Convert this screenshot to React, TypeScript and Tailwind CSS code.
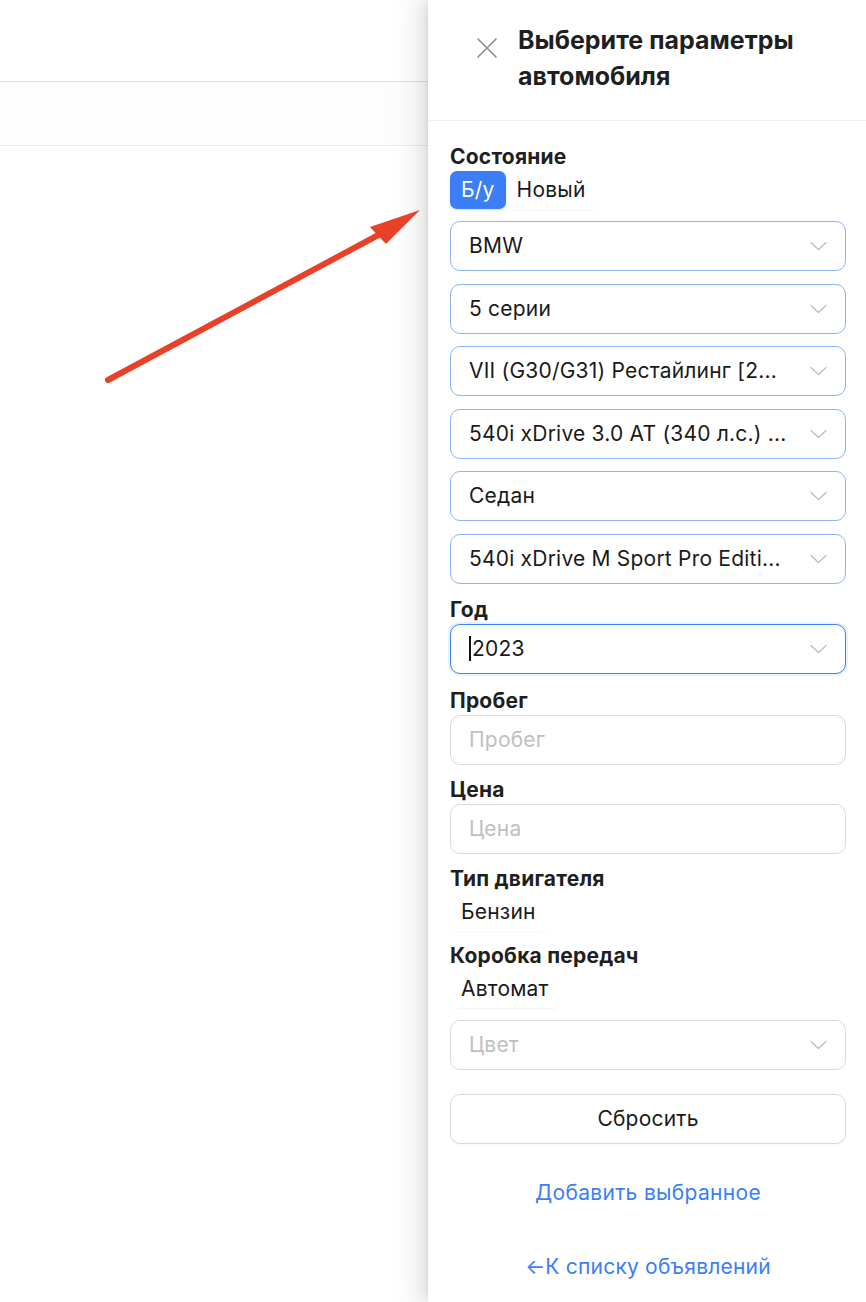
import React from "react";

const font = { fontFamily: 'Inter, "Noto Sans", "Liberation Sans", sans-serif' };

function Chevron() {
  return (
    <svg width="17" height="10" viewBox="0 0 17 10" fill="none" className="shrink-0">
      <path d="M1 1.5 L8.5 8.5 L16 1.5" stroke="#bdbdbd" strokeWidth="1.3" strokeLinecap="round" strokeLinejoin="round" />
    </svg>
  );
}

function Select({ value, placeholder, focused }: { value?: string; placeholder?: string; focused?: boolean }) {
  return (
    <div
      className={
        "flex h-[50px] items-center justify-between rounded-[10px] border bg-white pl-[18px] pr-[18px] " +
        (focused
          ? "border-[#3f82f2] shadow-[0_0_0_2px_rgba(5,145,255,0.1)]"
          : value
          ? "border-[#8fb5f5]"
          : "border-[#d9d9d9]")
      }
    >
      <div className="flex items-center whitespace-nowrap text-[21px] leading-[28px] tracking-[0.01em]">
        {focused && <span className="mr-[1px] inline-block h-[25px] w-[2px] bg-[#111]" />}
        {value ? (
          <span className="text-[#1a1a1a]">{value}</span>
        ) : (
          <span className="text-[#bfbfbf]">{placeholder}</span>
        )}
      </div>
      <Chevron />
    </div>
  );
}

function Input({ placeholder }: { placeholder: string }) {
  return (
    <div className="flex h-[50px] items-center rounded-[10px] border border-[#d9d9d9] bg-white pl-[18px] text-[21px] leading-[28px] tracking-[0.01em] text-[#bfbfbf]">
      {placeholder}
    </div>
  );
}

function Label({ children }: { children: React.ReactNode }) {
  return (
    <div className="text-[21px] font-bold leading-[28px] tracking-[0.01em] text-[#1f1f1f]">{children}</div>
  );
}

function Seg({ items, active }: { items: string[]; active?: number }) {
  return (
    <div className="flex h-[38px]">
      {items.map((it, i) => (
        <div
          key={it}
          className={
            "flex items-center rounded-[7px] px-[11px] text-[21px] tracking-[0.01em] " +
            (i === active
              ? "bg-[#3b7ef6] text-white shadow-[0_1px_2px_rgba(59,126,246,0.25)]"
              : "text-[#1a1a1a] shadow-[0_2px_3px_-1px_rgba(0,0,0,0.05)]")
          }
        >
          {it}
        </div>
      ))}
    </div>
  );
}

export default function App() {
  return (
    <div className="relative flex h-[1302px] w-[866px] overflow-hidden bg-white" style={font}>
      {/* left page */}
      <div className="flex w-[428px] shrink-0 flex-col">
        <div className="h-[82px] border-b border-[#dedede] bg-white shadow-[0_2px_4px_rgba(0,0,0,0.05)]" />
        <div className="h-[64px] border-b border-[#ebebeb] bg-[#fdfdfd]" />
        <div className="flex-1 bg-white" />
      </div>

      {/* drawer */}
      <div className="relative z-10 flex w-[438px] shrink-0 flex-col bg-white shadow-[-6px_0_16px_0_rgba(0,0,0,0.08),-3px_0_6px_-4px_rgba(0,0,0,0.12),-9px_0_28px_8px_rgba(0,0,0,0.05)]">
        <div className="flex h-[121px] items-start border-b border-[#f0f0f0] pl-[47px] pr-[16px] pt-[22px]">
          <div className="mt-[14px] flex h-[24px] w-[24px] items-center justify-center">
            <svg width="22" height="22" viewBox="0 0 22 22" fill="none">
              <path d="M2 2 L20 20 M20 2 L2 20" stroke="#8c8c8c" strokeWidth="1.6" strokeLinecap="round" />
            </svg>
          </div>
          <div className="ml-[19px] text-[25px] font-bold leading-[36px] text-[#1f1f1f]">
            Выберите параметры
            <br />
            автомобиля
          </div>
        </div>

        <div className="flex flex-col pl-[22px] pr-[20px] pt-[22px]">
          <Label>Состояние</Label>
          <Seg items={["Б/у", "Новый"]} active={0} />

          <div className="mt-[12px] flex flex-col gap-[12.5px]">
            <Select value="BMW" />
            <Select value="5 серии" />
            <Select value="VII (G30/G31) Рестайлинг [2..." />
            <Select value="540i xDrive 3.0 AT (340 л.с.) ..." />
            <Select value="Седан" />
            <Select value="540i xDrive M Sport Pro Editi..." />
          </div>

          <div className="mt-[12px]">
            <Label>Год</Label>
          </div>
          <Select value="2023" focused />

          <div className="mt-[13px]">
            <Label>Пробег</Label>
          </div>
          <Input placeholder="Пробег" />

          <div className="mt-[11px]">
            <Label>Цена</Label>
          </div>
          <Input placeholder="Цена" />

          <div className="mt-[11px]">
            <Label>Тип двигателя</Label>
          </div>
          <Seg items={["Бензин"]} />

          <div className="mt-[11px]">
            <Label>Коробка передач</Label>
          </div>
          <Seg items={["Автомат"]} />

          <div className="mt-[12px]">
            <Select placeholder="Цвет" />
          </div>

          <div className="mt-[24px] flex h-[50px] items-center justify-center rounded-[10px] border border-[#d9d9d9] bg-white text-[21px] tracking-[0.01em] text-[#1a1a1a] shadow-[0_2px_0_rgba(0,0,0,0.02)]">
            Сбросить
          </div>

          <div className="mt-[35px] text-center text-[21px] leading-[28px] tracking-[0.015em] text-[#3b7ef6]">
            Добавить выбранное
          </div>
          <div className="mt-[46px] text-center text-[21px] leading-[28px] tracking-[0.01em] text-[#3b7ef6]">
            ←К списку объявлений
          </div>
        </div>
      </div>

      {/* annotation arrow */}
      <svg className="pointer-events-none absolute left-0 top-0 z-20" width="866" height="1302" viewBox="0 0 866 1302">
        <line x1="108" y1="380" x2="384" y2="232" stroke="#e94128" strokeWidth="6" strokeLinecap="round" />
        <polygon points="420,210 370,227 386,244" fill="#e94128" />
      </svg>
    </div>
  );
}
